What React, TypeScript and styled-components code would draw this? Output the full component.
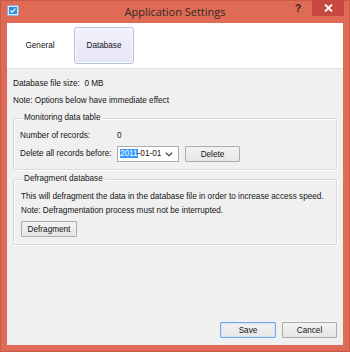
import React from 'react'
import styled, { createGlobalStyle } from 'styled-components'

const GlobalStyle = createGlobalStyle`
  html, body {
    margin: 0;
    padding: 0;
    background: #df6a55;
  }
  body {
    font-family: 'Liberation Sans', Arial, sans-serif;
  }
`

export default function App() {
  return (
    <>
      <GlobalStyle />
      <Window>
        <TitleBar>
          <AppIcon viewBox="0 0 12 12">
            <rect x="0.5" y="0.5" width="11" height="10" rx="1" fill="#dcecf8" stroke="#8fb4d6" />
            <rect x="2" y="2" width="8" height="7" fill="#2f8fdc" />
            <path d="M3.5 5.8 L5 7.2 L8.5 3.6" stroke="#ffffff" strokeWidth="1.3" fill="none" />
          </AppIcon>
          <Title>Application Settings</Title>
          <HelpButton>?</HelpButton>
          <CloseButton>
            <svg width="9" height="8" viewBox="0 0 9 8">
              <path d="M1 0.5 L8 7.5 M8 0.5 L1 7.5" stroke="#ffffff" strokeWidth="1.8" />
            </svg>
          </CloseButton>
        </TitleBar>

        <Client>
          <TabStrip>
            <Tab>General</Tab>
            <Tab active>Database</Tab>
          </TabStrip>

          <Content>
            <InfoLine>Database file size:&nbsp; 0 MB</InfoLine>
            <InfoLine gap={3}>Note: Options below have immediate effect</InfoLine>

            <GroupBox top={4}>
              <Legend>Monitoring data table</Legend>
              <RecordsGrid>
                <Label>Number of records:</Label>
                <Value>0</Value>
                <span />
                <Label>Delete all records before:</Label>
                <Combo>
                  <ComboText>
                    <Selected>2011</Selected>-01-01
                  </ComboText>
                  <svg width="8" height="5" viewBox="0 0 8 5">
                    <path d="M0.8 0.8 L4 3.8 L7.2 0.8" stroke="#444" strokeWidth="1.2" fill="none" />
                  </svg>
                </Combo>
                <Button width={55}>Delete</Button>
              </RecordsGrid>
            </GroupBox>

            <GroupBox top={3}>
              <Legend>Defragment database</Legend>
              <DefragText>
                This will defragment the data in the database file in order to increase access speed.
              </DefragText>
              <DefragText>Note: Defragmentation process must not be interrupted.</DefragText>
              <DefragAction>
                <Button width={56}>Defragment</Button>
              </DefragAction>
            </GroupBox>
          </Content>

          <Footer>
            <Button width={56} primary>
              Save
            </Button>
            <Button width={55}>Cancel</Button>
          </Footer>
        </Client>
      </Window>
    </>
  )
}

const Window = styled.div`
  width: 350px;
  height: 352px;
  box-sizing: border-box;
  background: #df6a55;
  border: 1px solid #c85a47;
  display: flex;
  flex-direction: column;
  padding: 0 6px 6px 6px;
`

const TitleBar = styled.div`
  height: 22px;
  display: flex;
  align-items: flex-start;
  position: relative;
`

const AppIcon = styled.svg`
  width: 12px;
  height: 12px;
  margin-top: 4px;
`

const Title = styled.div`
  position: absolute;
  left: -6px;
  right: -6px;
  top: 3px;
  text-align: center;
  font-family: 'Open Sans', 'Noto Sans', sans-serif;
  font-size: 11px;
  color: #2f2a28;
  pointer-events: none;
`

const HelpButton = styled.div`
  margin-left: auto;
  width: 22px;
  height: 16px;
  margin-top: -1px;
  margin-right: 3px;
  display: flex;
  align-items: center;
  justify-content: center;
  font-family: 'Liberation Sans', Arial, sans-serif;
  font-weight: bold;
  font-size: 10px;
  color: #3a2420;
`

const CloseButton = styled.div`
  width: 32px;
  height: 16px;
  margin-top: -1px;
  margin-right: -1px;
  background: #c7483e;
  display: flex;
  align-items: center;
  justify-content: center;
`

const Client = styled.div`
  flex: 1;
  display: flex;
  flex-direction: column;
  background: #f0f0f0;
  font-family: 'Liberation Sans', Arial, sans-serif;
  font-size: 8.2px;
  color: #141414;
`

const TabStrip = styled.div`
  height: 46px;
  box-sizing: border-box;
  background: #ffffff;
  border-bottom: 1px solid #e3e3e3;
  display: flex;
  gap: 4px;
  padding: 4px 0 0 3px;
`

const Tab = styled.div<{ active?: boolean }>`
  width: 60px;
  height: 37px;
  box-sizing: border-box;
  display: flex;
  align-items: center;
  justify-content: center;
  border-radius: 3px;
  border: 1px solid ${p => (p.active ? '#b3c2d6' : 'transparent')};
  background: ${p => (p.active ? 'linear-gradient(#f1f1fb, #e6e6f8)' : 'transparent')};
  box-shadow: ${p => (p.active ? 'inset 0 0 0 1px #f8f8ff' : 'none')};
  color: #141414;
`

const Content = styled.div`
  flex: 1;
  padding: 8px 6px 0 6px;
  display: flex;
  flex-direction: column;
`

const InfoLine = styled.div<{ gap?: number }>`
  line-height: 14px;
  margin-top: ${p => p.gap ?? 0}px;
`

const GroupBox = styled.fieldset<{ top: number }>`
  margin: ${p => p.top}px 0 0 0;
  padding: 5px 6px 7px 6px;
  border: 1px solid #d8d8d8;
  border-radius: 1px;
  box-shadow: inset 1px 1px 0 #ffffff, 1px 1px 0 #ffffff;
  min-width: 0;
`

const Legend = styled.legend`
  padding: 0 2px 0 1px;
  margin-left: 3px;
  line-height: 12px;
  color: #141414;
`

const RecordsGrid = styled.div`
  display: grid;
  grid-template-columns: 97px auto auto;
  grid-template-rows: 14px 16px;
  row-gap: 3px;
  align-items: center;
  justify-content: start;
`

const Label = styled.span`
  line-height: 14px;
`

const Value = styled.span`
  line-height: 14px;
`

const Combo = styled.div`
  width: 62px;
  height: 16px;
  box-sizing: border-box;
  background: #ffffff;
  border: 1px solid #abadb3;
  display: flex;
  align-items: center;
  justify-content: space-between;
  padding: 0 5px 0 2px;
`

const ComboText = styled.span`
  line-height: 12px;
`

const Selected = styled.span`
  background: #3399ff;
  color: #ffffff;
`

const Button = styled.div<{ width: number; primary?: boolean }>`
  width: ${p => p.width}px;
  height: 16px;
  box-sizing: border-box;
  margin-left: 6px;
  display: flex;
  align-items: center;
  justify-content: center;
  border: 1px solid ${p => (p.primary ? '#6fa9e6' : '#adadad')};
  box-shadow: ${p => (p.primary ? 'inset 0 0 0 1px #cfe6fa' : 'none')};
  background: linear-gradient(#f2f2f2, #e6e6e6);
  border-radius: 1px;
  color: #141414;
`

const DefragText = styled.div`
  line-height: 14px;
  padding-left: 1px;
`

const DefragAction = styled.div`
  margin-top: 3px;
  display: flex;
  margin-left: -6px;
  padding-left: 1px;
`

const Footer = styled.div`
  display: flex;
  justify-content: flex-end;
  padding: 0 6px 7px 0;
`
